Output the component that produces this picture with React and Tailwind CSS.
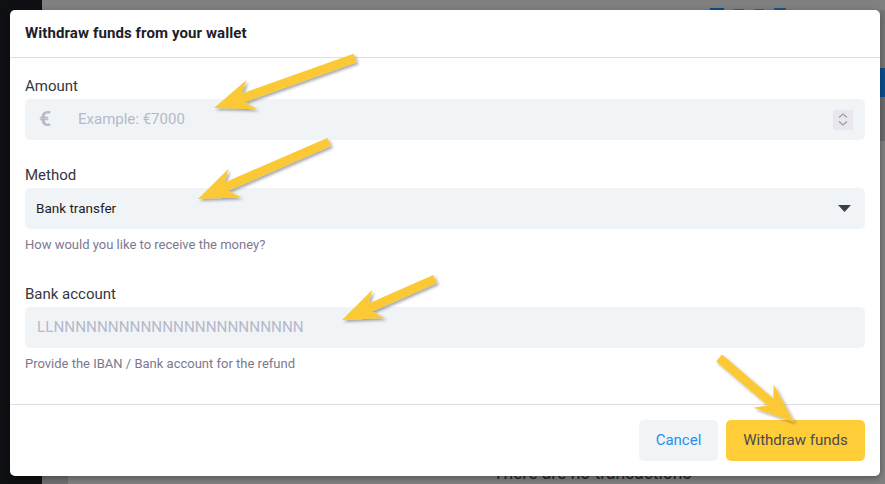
import React from "react";

const arrows = [
  { tail: [355, 58], tip: [214, 108] },
  { tail: [329, 142], tip: [198, 199] },
  { tail: [435, 279], tip: [342, 320] },
  { tail: [719, 358], tip: [794, 422] },
];

function arrowPoints({ tail, tip }) {
  const dx = tip[0] - tail[0];
  const dy = tip[1] - tail[1];
  const len = Math.hypot(dx, dy);
  const ux = dx / len;
  const uy = dy / len;
  const nx = -uy;
  const ny = ux;
  const w = 4.5;
  const hw = 15.5;
  const join = 31;
  const back = 40;
  const p = (along, side) => [
    tip[0] - ux * along + nx * side,
    tip[1] - uy * along + ny * side,
  ];
  const pts = [
    [tail[0] + nx * w, tail[1] + ny * w],
    p(join, w),
    p(back, hw),
    tip,
    p(back, -hw),
    p(join, -w),
    [tail[0] - nx * w, tail[1] - ny * w],
  ];
  return pts.map((q) => q[0].toFixed(1) + "," + q[1].toFixed(1)).join(" ");
}

function Label({ children, className = "" }) {
  return (
    <div className={"text-[15px] leading-[20px] text-[#33363f] " + className}>
      {children}
    </div>
  );
}

export default function App() {
  return (
    <div
      className="relative w-[885px] h-[484px] overflow-hidden flex bg-[#808080]"
      style={{ fontFamily: "Roboto, 'Noto Sans', sans-serif" }}
    >
      {/* background page (dimmed) */}
      <div className="w-[42px] h-full bg-[#0f1014]" />
      <div className="flex-1 flex flex-col relative">
        <div className="h-[10px] flex items-start gap-[10px] pl-[668px]">
          <div className="w-[14px] h-[2px] mt-[8px] bg-[#0d4d87]" />
          <div className="w-[10px] h-[1px] mt-[9px] bg-[#3d5f80]" />
          <div className="w-[10px] h-[1px] mt-[9px] bg-[#3d5f80]" />
          <div className="w-[12px] h-[2px] mt-[8px] bg-[#1c5688]" />
        </div>
        <div className="flex-1 flex justify-end">
          <div className="w-[5px] flex flex-col">
            <div className="h-[58px] bg-[#767676]" />
            <div className="h-[29px] bg-[#0b4f8e]" />
            <div className="h-[44px] bg-[#6c6c70]" />
          </div>
        </div>
        <div className="absolute left-[451px] top-[462px] text-[17.5px] leading-[22px] text-[#262626] whitespace-nowrap">
          There are no transactions
        </div>
        <div className="absolute left-0 bottom-0 w-[26px] h-[8px] bg-[#6e6e73]" />
      </div>

      {/* modal */}
      <div className="absolute left-[10px] top-[10px] w-[870px] h-[466px] bg-white rounded-[5px] shadow-[0_2px_6px_rgba(0,0,0,0.35)] flex flex-col">
        <div className="h-[48px] px-[15px] flex items-center border-b border-[#dedfe4]">
          <div className="text-[15px] font-bold text-[#1d2029] tracking-[0.1px]">
            Withdraw funds from your wallet
          </div>
        </div>

        <div className="flex-1 px-[15px] pt-[18px] border-b border-[#dedfe4]">
          <Label className="mb-[3px]">Amount</Label>
          <div className="h-[41px] rounded-[5px] bg-[#f1f4f7] flex items-center">
            <div className="w-[53px] pl-[14px] text-[21px] font-bold text-[#b9bac7] leading-none">
              €
            </div>
            <div className="flex-1 text-[15px] text-[#b7b8c9]">Example: €7000</div>
            <div className="w-[20px] h-[20px] mr-[12px] bg-[#e7e7ed] flex flex-col items-center justify-center gap-[3px]">
              <svg width="10" height="5" viewBox="0 0 10 5">
                <path d="M1 4.5 L5 1 L9 4.5" fill="none" stroke="#9c9cab" strokeWidth="1.3" />
              </svg>
              <svg width="10" height="5" viewBox="0 0 10 5">
                <path d="M1 0.5 L5 4 L9 0.5" fill="none" stroke="#9c9cab" strokeWidth="1.3" />
              </svg>
            </div>
          </div>

          <Label className="mt-[25px] mb-[3px]">Method</Label>
          <div className="h-[41px] rounded-[5px] bg-[#f1f4f7] flex items-center justify-between pl-[11px] pr-[14px]">
            <div className="text-[13.5px] text-[#222328]">Bank transfer</div>
            <svg width="13" height="7" viewBox="0 0 13 7">
              <path d="M0 0 H13 L6.5 7 Z" fill="#3c3f4e" />
            </svg>
          </div>
          <div className="mt-[8px] text-[13px] leading-[16px] text-[#7b798f]">
            How would you like to receive the money?
          </div>

          <Label className="mt-[31px] mb-[3px]">Bank account</Label>
          <div className="h-[41px] rounded-[5px] bg-[#f1f4f7] flex items-center pl-[12px]">
            <div className="text-[15.25px] text-[#b7b8c9]">LLNNNNNNNNNNNNNNNNNNNNNNN</div>
          </div>
          <div className="mt-[8px] text-[13px] leading-[16px] text-[#7b798f]">
            Provide the IBAN / Bank account for the refund
          </div>
        </div>

        <div className="h-[71px] px-[15px] pt-[15px] flex justify-end gap-[8px]">
          <div className="h-[41px] w-[79px] rounded-[5px] bg-[#f1f4f7] flex items-center justify-center text-[15px] text-[#2491f0]">
            Cancel
          </div>
          <div className="h-[41px] w-[139px] rounded-[5px] bg-[#ffcd37] flex items-center justify-center text-[15px] text-[#4a4a4f]">
            Withdraw funds
          </div>
        </div>
      </div>

      {/* annotation arrows */}
      <svg
        className="absolute inset-0 pointer-events-none"
        width="885"
        height="484"
        viewBox="0 0 885 484"
      >
        <defs>
          <filter id="sh" x="-20%" y="-20%" width="140%" height="140%">
            <feDropShadow dx="2" dy="2" stdDeviation="1.6" floodColor="#000" floodOpacity="0.35" />
          </filter>
        </defs>
        {arrows.map((a, i) => (
          <polygon key={i} points={arrowPoints(a)} fill="#fbc936" filter="url(#sh)" strokeLinejoin="round" />
        ))}
      </svg>
    </div>
  );
}
